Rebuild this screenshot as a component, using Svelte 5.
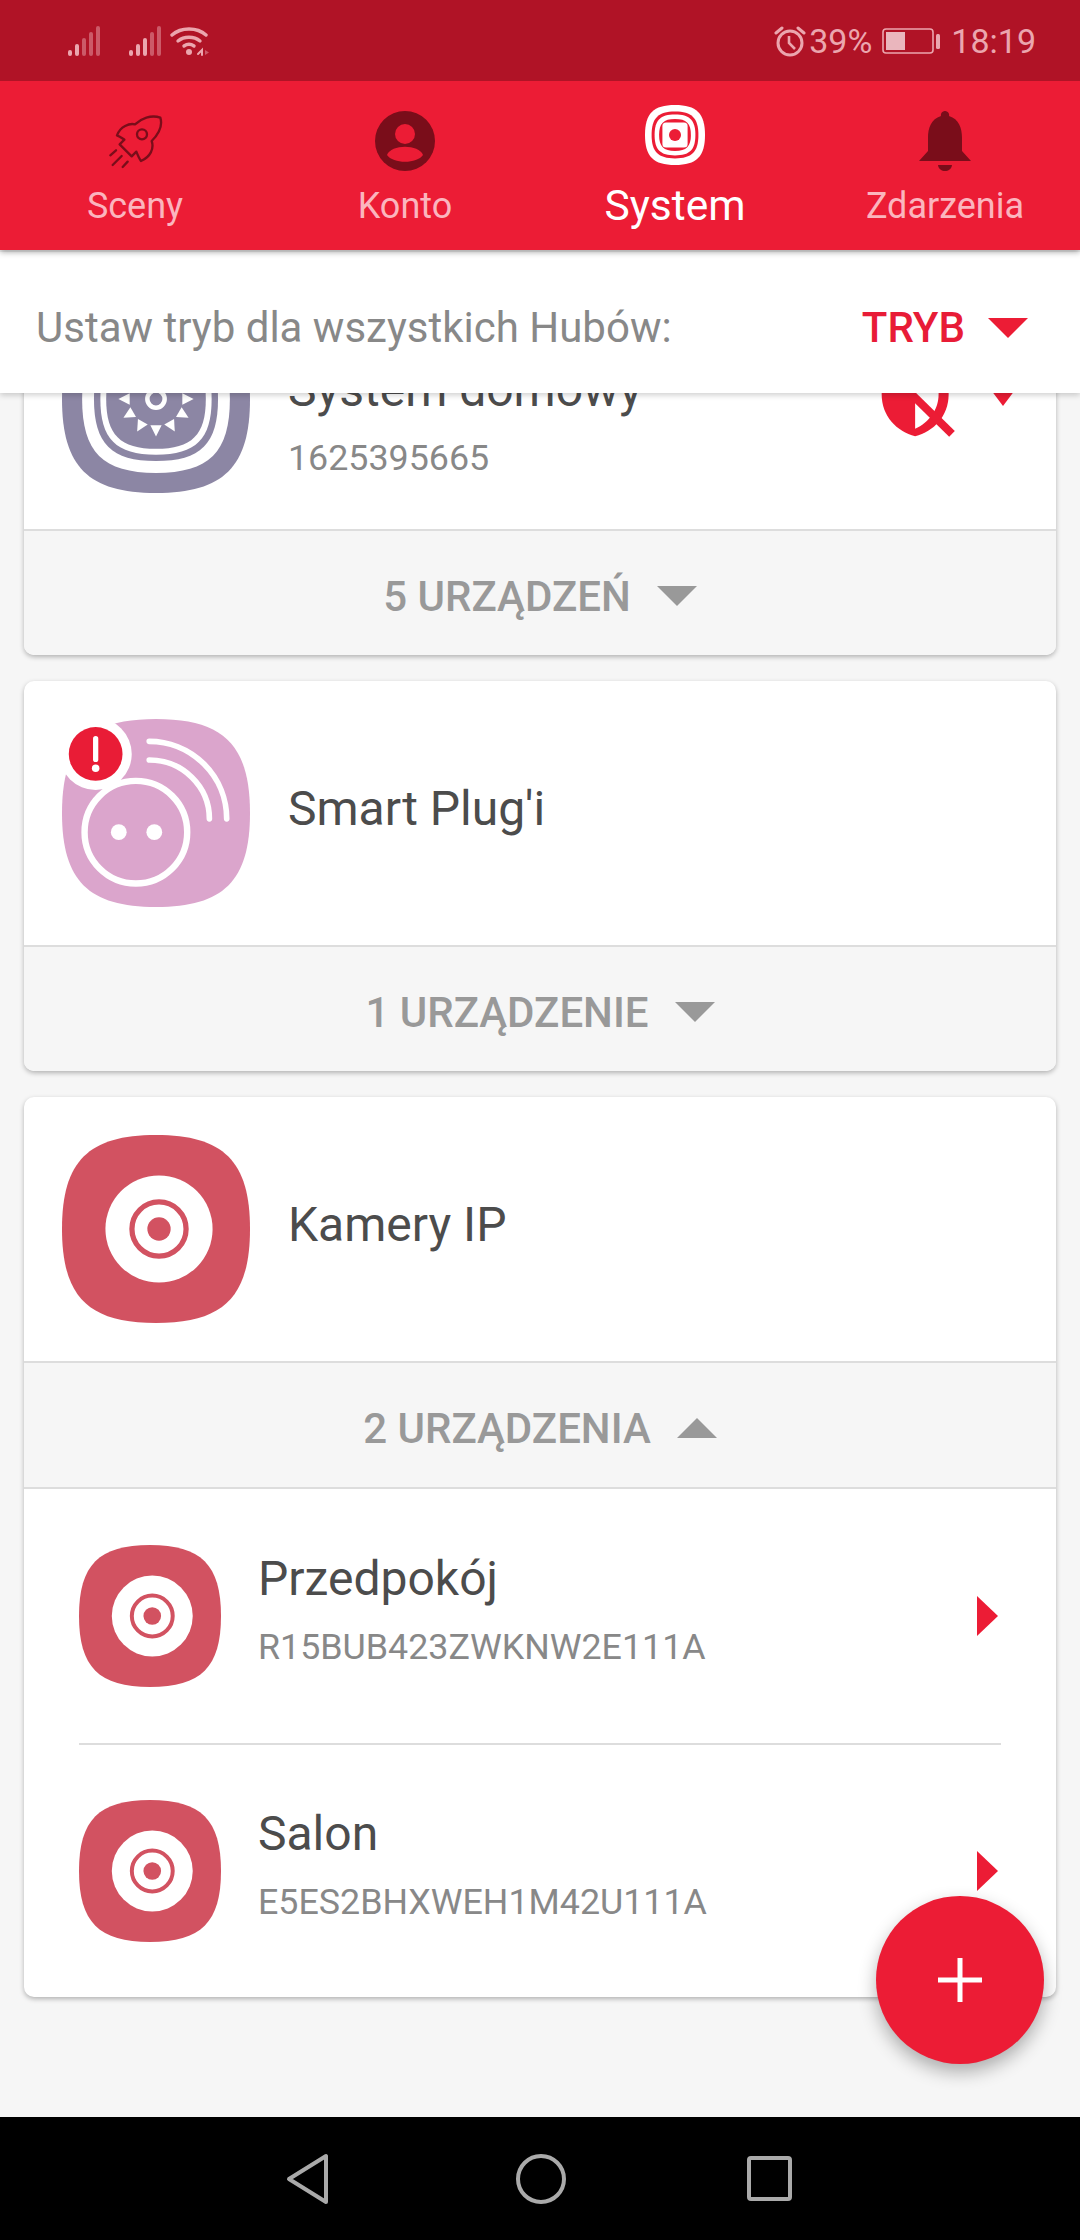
<script>
	const sq = 'M50 0C86 0 100 14 100 50S86 100 50 100 0 86 0 50 14 0 50 0Z';
	const rays = Array.from({ length: 12 }, (_, i) => i * 30);
	const signal = [24, 18, 12, 6, 0];
	const rooms = [
		{ name: 'Przedpokój', id: 'R15BUB423ZWKNW2E111A' },
		{ name: 'Salon', id: 'E5ES2BHXWEH1M42U111A' }
	];
</script>

{#snippet cameraIcon(cls)}
	<svg class={cls} viewBox="0 0 100 100">
		<path d={sq} fill="#d25261" />
		<circle cx="51.6" cy="50" r="28.5" fill="#fff" />
		<circle cx="51.6" cy="50" r="14.4" fill="none" stroke="#d25261" stroke-width="2.8" />
		<circle cx="51.6" cy="50" r="6.2" fill="#d25261" />
	</svg>
{/snippet}

{#snippet bars(bright)}
	<svg class="signal" viewBox="0 0 32 30">
		{#each signal as top, i}
			<rect x={i * 7} y={top} width="4" height={30 - top} rx="2" fill={i < bright ? '#eba6ae' : '#cc5a68'} />
		{/each}
	</svg>
{/snippet}

<div class="screen">
	<div class="status">
		<div class="status-left">
			{@render bars(2)}
			{@render bars(3)}
			<svg class="wifi" viewBox="0 0 40 30" fill="none" stroke="#eba6ae" stroke-linecap="round">
				<path d="M2 9C11 1 27 1 36 9" stroke-width="3.4" />
				<path d="M8 15C14 10 24 10 30 15" stroke-width="3.4" />
				<path d="M14 20C17 18 21 18 24 20" stroke-width="3.4" />
				<circle cx="19" cy="26" r="3" fill="#eba6ae" stroke="none" />
				<path d="M28 28L32 24V29" stroke-width="2" />
				<path d="M35 24L39 26.5 35 29Z" fill="#cc5a68" stroke="none" />
			</svg>
		</div>
		<div class="status-right">
			<svg class="alarm" viewBox="0 0 32 32" fill="none" stroke="#eba6ae" stroke-width="3">
				<circle cx="16" cy="18" r="12" />
				<path d="M15 11V18L21 24" stroke-width="2.6" />
				<path d="M2 8L8 3M30 8L24 3" stroke-linecap="round" />
			</svg>
			<span class="pct">39%</span>
			<svg class="battery" viewBox="0 0 58 26">
				<rect x="1" y="1" width="50" height="24" rx="3" fill="none" stroke="#eba6ae" stroke-width="1.6" />
				<rect x="4" y="4" width="19" height="18" fill="#eab6bd" />
				<rect x="54" y="6" width="4" height="15" rx="1.5" fill="#eba6ae" />
			</svg>
			<span class="time">18:19</span>
		</div>
	</div>

	<nav class="tabs">
		<div class="tab">
			<svg class="tab-icon" viewBox="132 62 180 180" fill="none" stroke="#7a0d1a" stroke-width="7" stroke-linecap="round" stroke-linejoin="round">
				<path d="M298 82C270 72 240 85 222 102C205 98 178 108 168 135C178 140 186 144 190 148L176 162L212 198L226 184C230 194 234 204 240 212C268 200 280 175 272 152C292 132 306 108 298 82Z" />
				<circle cx="243" cy="132" r="15" />
				<path d="M148 195L165 180M155 224L182 197M185 230L200 214" />
			</svg>
			<span>Sceny</span>
		</div>
		<div class="tab">
			<svg class="tab-icon" viewBox="0 0 60 60">
				<circle cx="30" cy="30" r="30" fill="#7a0d1a" />
				<circle cx="30" cy="23" r="10" fill="#ec1c35" />
				<path d="M12 44C16 33 44 33 48 44C42 53 18 53 12 44Z" fill="#ec1c35" />
			</svg>
			<span>Konto</span>
		</div>
		<div class="tab active">
			<svg class="tab-icon" viewBox="0 0 100 100">
				<path d={sq} fill="#fff" />
				<path d={sq} fill="#ec1c35" transform="translate(11 11) scale(.78)" />
				<path d={sq} fill="#fff" transform="translate(16 16) scale(.68)" />
				<path d={sq} fill="#ec1c35" transform="translate(23.5 23.5) scale(.53)" />
				<rect x="29" y="29" width="42" height="42" rx="6" fill="#fff" />
				<circle cx="50" cy="50" r="10" fill="#ec1c35" />
			</svg>
			<span>System</span>
		</div>
		<div class="tab">
			<svg class="tab-icon" viewBox="0 0 60 60">
				<path d="M30 0a4 4 0 0 1 4 5C44 8 47 17 47 27V40L56 50H4L13 40V27C13 17 16 8 26 5a4 4 0 0 1 4-5Z" fill="#7a0d1a" />
				<path d="M23 54H37C36 62 24 62 23 54Z" fill="#7a0d1a" />
			</svg>
			<span>Zdarzenia</span>
		</div>
	</nav>

	<div class="mode-bar">
		<span class="mode-label">Ustaw tryb dla wszystkich Hubów:</span>
		<div class="mode-pick">
			<span>TRYB</span>
			<i class="arrow-down red big"></i>
		</div>
	</div>

	<main class="list">
		<section class="card">
			<div class="head first">
				<svg class="hub-icon" viewBox="0 0 100 100">
					<path d={sq} fill="#8c86a4" />
					<path d={sq} fill="#fff" transform="translate(10.7 10.7) scale(.786)" />
					<path d={sq} fill="#8c86a4" transform="translate(17 17) scale(.66)" />
					<path d={sq} fill="#fff" transform="translate(20.4 20.4) scale(.592)" />
					<path d={sq} fill="#8c86a4" transform="translate(23.5 23.5) scale(.53)" />
					{#each rays as r}
						<path d="M50 70L47 64H53Z" fill="#fff" transform="rotate({r} 50 50)" />
					{/each}
					<circle cx="50" cy="50" r="4.6" fill="none" stroke="#fff" stroke-width="2.4" />
				</svg>
				<div class="head-text">
					<div class="title">System domowy</div>
					<div class="sub">1625395665</div>
				</div>
				<div class="hub-state">
					<svg class="shield" viewBox="60 -70 230 230">
						<path d="M165 -70L65 -35V30C65 95 110 140 165 155C220 140 265 95 265 30V-35Z" fill="#ec1c35" />
						<path d="M165 -50L235 -25V30C235 75 205 115 165 132Z" fill="#fff" />
						<path d="M145 20L275 148" stroke="#ec1c35" stroke-width="24" />
					</svg>
					<i class="arrow-down red"></i>
				</div>
			</div>
			<div class="foot">
				<span>5 URZĄDZEŃ</span>
				<i class="arrow-down grey"></i>
			</div>
		</section>

		<section class="card">
			<div class="head">
				<svg class="hub-icon" viewBox="0 0 100 100">
					<path d={sq} fill="#dba5cc" />
					<circle cx="39.3" cy="60.2" r="27.3" fill="none" stroke="#fff" stroke-width="3.4" />
					<circle cx="30.2" cy="60.2" r="4.2" fill="#fff" />
					<circle cx="49.1" cy="60.2" r="4.2" fill="#fff" />
					<path d="M46.4 11.9A41.2 41.2 0 0 1 87.6 53.1M46.4 21.8A32 31.3 0 0 1 78.4 53.1" fill="none" stroke="#fff" stroke-width="3" stroke-linecap="round" />
					<circle cx="17.9" cy="18.6" r="19.2" fill="#fff" />
					<circle cx="17.9" cy="18.6" r="14.3" fill="#e91c36" />
					<path d="M17.9 10.5V21.5" stroke="#fff" stroke-width="2.8" stroke-linecap="round" />
					<circle cx="17.9" cy="26.2" r="2" fill="#fff" />
				</svg>
				<div class="head-text">
					<div class="title">Smart Plug'i</div>
				</div>
			</div>
			<div class="foot">
				<span>1 URZĄDZENIE</span>
				<i class="arrow-down grey"></i>
			</div>
		</section>

		<section class="card">
			<div class="head">
				{@render cameraIcon('hub-icon')}
				<div class="head-text">
					<div class="title">Kamery IP</div>
				</div>
			</div>
			<div class="foot">
				<span>2 URZĄDZENIA</span>
				<i class="arrow-up grey"></i>
			</div>
			<div class="rooms">
				{#each rooms as room}
					<div class="room">
						{@render cameraIcon('room-icon')}
						<div class="room-text">
							<div class="title">{room.name}</div>
							<div class="sub">{room.id}</div>
						</div>
						<i class="chevron"></i>
					</div>
				{/each}
			</div>
		</section>
	</main>

	<button class="fab" aria-label="Dodaj">
		<svg viewBox="0 0 44 44" width="44" height="44">
			<path d="M22 0V44M0 22H44" stroke="#fff" stroke-width="5" />
		</svg>
	</button>

	<div class="sysnav">
		<svg viewBox="0 0 44 52" class="nav-btn"><path d="M40 3V49L3 26Z" fill="none" stroke="#aaa" stroke-width="4" stroke-linejoin="round" /></svg>
		<svg viewBox="0 0 52 52" class="nav-btn"><circle cx="26" cy="26" r="23" fill="none" stroke="#aaa" stroke-width="4" /></svg>
		<svg viewBox="0 0 52 52" class="nav-btn last"><rect x="5" y="5" width="41" height="41" rx="2" fill="none" stroke="#aaa" stroke-width="4" /></svg>
	</div>
</div>

<style>
	:global(body) {
		background: #f6f6f6;
	}
	.screen {
		position: relative;
		width: 1080px;
		height: 2240px;
		overflow: hidden;
		display: flex;
		flex-direction: column;
		background: #f6f6f6;
		font-family: Roboto, sans-serif;
	}
	.status {
		height: 81px;
		flex: none;
		background: #b01326;
		display: flex;
		justify-content: space-between;
		align-items: center;
		padding: 0 44px 0 68px;
		color: #eba6ae;
		font-size: 34px;
		box-sizing: border-box;
		position: relative;
		z-index: 4;
	}
	.status-left,
	.status-right {
		display: flex;
		align-items: center;
	}
	.signal {
		width: 32px;
		height: 30px;
		margin-right: 29px;
	}
	.signal + .signal {
		margin-right: 9px;
	}
	.wifi {
		width: 40px;
		height: 30px;
	}
	.alarm {
		width: 32px;
		height: 32px;
		margin-right: 3px;
	}
	.battery {
		width: 58px;
		height: 26px;
		margin: 0 11px 0 10px;
	}
	.tabs {
		height: 169px;
		flex: none;
		background: #ec1c35;
		display: grid;
		grid-template-columns: repeat(4, 1fr);
		position: relative;
		z-index: 3;
		box-shadow: 0 2px 6px rgba(0, 0, 0, 0.35);
	}
	.tab {
		display: flex;
		flex-direction: column;
		align-items: center;
		padding-top: 30px;
		color: #fbb5be;
		font-size: 36px;
		line-height: 56px;
	}
	.tab-icon {
		width: 60px;
		height: 60px;
		flex: none;
		margin-bottom: 7px;
	}
	.active {
		color: #fff;
		font-size: 42.5px;
	}
	.active .tab-icon {
		margin-top: -6px;
		margin-bottom: 13px;
	}
	.mode-bar {
		height: 141px;
		margin-top: 2px;
		box-sizing: border-box;
		flex: none;
		background: #fff;
		display: flex;
		justify-content: space-between;
		align-items: center;
		padding: 10px 52px 0 36px;
		position: relative;
		z-index: 2;
		box-shadow: 0 2px 6px rgba(0, 0, 0, 0.2);
	}
	.mode-label {
		font-size: 42px;
		color: #888;
	}
	.mode-pick {
		display: flex;
		align-items: center;
		gap: 23px;
		color: #e81c37;
		font-size: 42px;
		font-weight: 500;
	}
	.arrow-down,
	.arrow-up {
		display: block;
		width: 0;
		height: 0;
		border-left: 20px solid transparent;
		border-right: 20px solid transparent;
	}
	.arrow-down {
		border-top: 20px solid #999;
	}
	.arrow-up {
		border-bottom: 20px solid #999;
	}
	.arrow-down.red {
		border-top-color: #ec1c35;
		border-left-width: 15px;
		border-right-width: 15px;
	}
	.arrow-down.big {
		border-left-width: 20px;
		border-right-width: 20px;
	}
	.list {
		margin-top: -125px;
		padding: 0 24px;
		display: flex;
		flex-direction: column;
		gap: 26px;
	}
	.card {
		background: #fff;
		border-radius: 10px;
		box-shadow: 0 2px 5px rgba(0, 0, 0, 0.28);
		overflow: hidden;
	}
	.head {
		height: 264px;
		display: flex;
		align-items: center;
		padding-left: 38px;
	}
	.head.first {
		height: 261px;
	}
	.hub-icon {
		width: 188px;
		height: 188px;
		flex: none;
	}
	.head-text {
		margin-left: 38px;
		flex: 1;
		margin-top: -9px;
	}
	.head.first .head-text {
		margin-top: 44px;
	}
	.title {
		font-size: 48px;
		line-height: 56px;
		color: #4c4c4c;
	}
	.sub {
		font-size: 35.8px;
		line-height: 44px;
		color: #888;
		margin-top: 18px;
	}
	.hub-state {
		display: flex;
		align-items: flex-start;
		gap: 31px;
		margin-right: 38px;
		align-self: flex-start;
		margin-top: 93px;
	}
	.hub-state .arrow-down {
		margin-top: 25px;
	}
	.shield {
		width: 77px;
		height: 77px;
	}
	.foot {
		height: 126px;
		box-sizing: border-box;
		background: #f6f6f6;
		border-top: 2px solid #ddd;
		padding-top: 6px;
		display: flex;
		justify-content: center;
		align-items: center;
		gap: 26px;
		font-size: 42px;
		font-weight: 500;
		color: #999;
	}
	.rooms {
		border-top: 2px solid #ddd;
		padding: 0 55px;
	}
	.room {
		height: 254px;
		box-sizing: border-box;
		display: flex;
		align-items: center;
		position: relative;
	}
	.room + .room {
		border-top: 2px solid #ddd;
	}
	.room-icon {
		width: 142px;
		height: 142px;
		flex: none;
	}
	.room-text {
		flex: 1;
		margin-left: 37px;
		margin-top: -12px;
	}
	.chevron {
		width: 0;
		height: 0;
		border-top: 20px solid transparent;
		border-bottom: 20px solid transparent;
		border-left: 21px solid #ec1c35;
		margin-right: 3px;
	}
	.fab {
		position: absolute;
		left: 876px;
		top: 1896px;
		width: 168px;
		height: 168px;
		padding: 0;
		border: 0;
		border-radius: 50%;
		background: #ec1c35;
		box-shadow: 0 8px 18px rgba(0, 0, 0, 0.3);
		display: flex;
		align-items: center;
		justify-content: center;
		z-index: 1;
	}
	.sysnav {
		margin-top: auto;
		height: 123px;
		flex: none;
		background: #000;
		display: flex;
		justify-content: center;
		align-items: center;
		gap: 181px;
		padding-right: 2px;
		position: relative;
		z-index: 2;
	}
	.nav-btn {
		height: 52px;
		width: 52px;
	}
	.nav-btn.last {
		margin-left: -4px;
	}
</style>
